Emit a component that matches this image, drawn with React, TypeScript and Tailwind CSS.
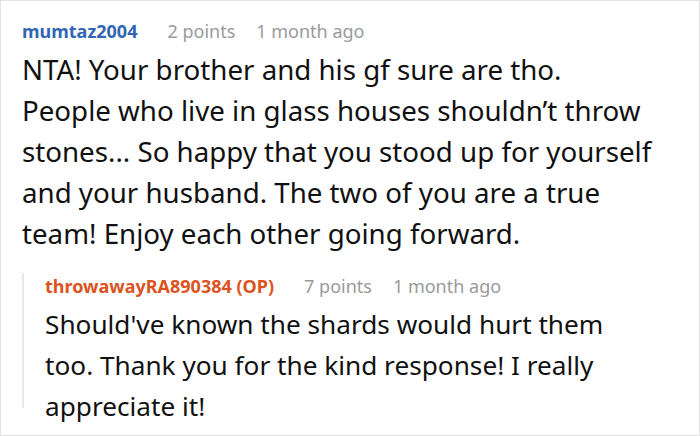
import React from 'react';

const Meta: React.FC<{ name: string; points: string; ago: string; op?: boolean; className?: string }> = ({ name, points, ago, op, className = '' }) => (
  <div className={`flex items-baseline h-[26px] text-[18px] leading-[26px] ${className}`}>
    <span className={`font-bold ${op ? 'text-[#dc5322]' : 'text-[#3166b5]'}`}>{name}</span>
    <span className="ml-[30px] text-[#9a9a9a]">{points}</span>
    <span className="ml-[21px] text-[#9a9a9a]">{ago}</span>
  </div>
);

const Lines: React.FC<{ lines: string[]; className: string }> = ({ lines, className }) => (
  <p className={`text-[#111] leading-[41px] whitespace-nowrap ${className}`}>
    {lines.map((l, i) => (
      <span key={i} className="block">{l}</span>
    ))}
  </p>
);

const App: React.FC = () => {
  return (
    <div
      className="w-[700px] h-[436px] bg-white border border-[#e3e3e3] overflow-hidden"
      style={{ fontFamily: '"Noto Sans", "Open Sans", sans-serif' }}
    >
      <div className="pl-[21px] pt-[17px]">
        <Meta name="mumtaz2004" points="2 points" ago="1 month ago" />
        <Lines
          className="mt-[5px] text-[27.7px]"
          lines={[
            'NTA! Your brother and his gf sure are tho.',
            'People who live in glass houses shouldn’t throw',
            'stones... So happy that you stood up for yourself',
            'and your husband. The two of you are a true',
            'team! Enjoy each other going forward.',
          ]}
        />
        <div className="mt-[30px] border-l-2 border-[#e8e8e8] pl-[21px] h-[135px]">
          <Meta name="throwawayRA890384 (OP)" points="7 points" ago="1 month ago" op className="-mt-[11px]" />
          <Lines
            className="mt-[5px] text-[26.2px]"
            lines={[
              "Should've known the shards would hurt them",
              'too. Thank you for the kind response! I really',
              'appreciate it!',
            ]}
          />
        </div>
      </div>
    </div>
  );
};

export default App;
